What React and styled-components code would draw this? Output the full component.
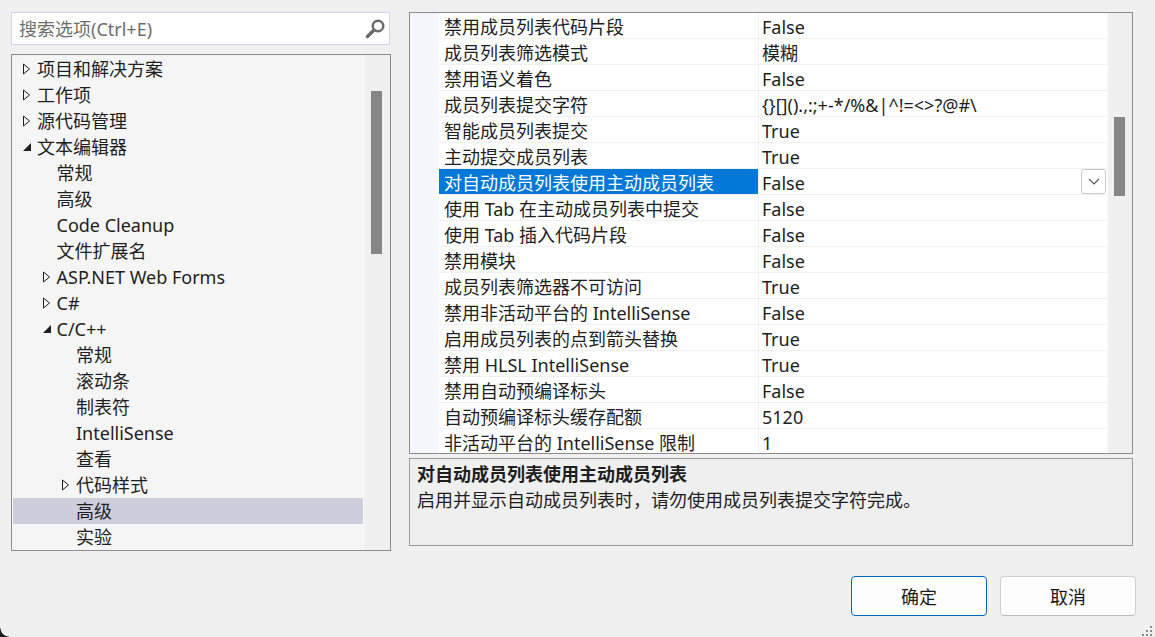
import styled, { createGlobalStyle } from "styled-components";

// ========== global ==========
const Global = createGlobalStyle`
  html, body {
    margin: 0;
    padding: 0;
    background: #f0f0f0;
  }
  body {
    font-family: "Noto Sans", "Noto Sans CJK SC", sans-serif;
    font-size: 18px;
    color: #1e1e1e;
  }
  * { box-sizing: border-box; }
`;

// ========== data ==========
const treeItems = [
  { label: "项目和解决方案", level: 0, arrow: "closed" },
  { label: "工作项", level: 0, arrow: "closed" },
  { label: "源代码管理", level: 0, arrow: "closed" },
  { label: "文本编辑器", level: 0, arrow: "open" },
  { label: "常规", level: 1 },
  { label: "高级", level: 1 },
  { label: "Code Cleanup", level: 1 },
  { label: "文件扩展名", level: 1 },
  { label: "ASP.NET Web Forms", level: 1, arrow: "closed" },
  { label: "C#", level: 1, arrow: "closed" },
  { label: "C/C++", level: 1, arrow: "open" },
  { label: "常规", level: 2 },
  { label: "滚动条", level: 2 },
  { label: "制表符", level: 2 },
  { label: "IntelliSense", level: 2 },
  { label: "查看", level: 2 },
  { label: "代码样式", level: 2, arrow: "closed" },
  { label: "高级", level: 2, selected: true },
  { label: "实验", level: 2 },
];

const props = [
  ["禁用成员列表代码片段", "False"],
  ["成员列表筛选模式", "模糊"],
  ["禁用语义着色", "False"],
  ["成员列表提交字符", "{}[]().,:;+-*/%&|^!=<>?@#\\"],
  ["智能成员列表提交", "True"],
  ["主动提交成员列表", "True"],
  ["对自动成员列表使用主动成员列表", "False", true],
  ["使用 Tab 在主动成员列表中提交", "False"],
  ["使用 Tab 插入代码片段", "False"],
  ["禁用模块", "False"],
  ["成员列表筛选器不可访问", "True"],
  ["禁用非活动平台的 IntelliSense", "False"],
  ["启用成员列表的点到箭头替换", "True"],
  ["禁用 HLSL IntelliSense", "True"],
  ["禁用自动预编译标头", "False"],
  ["自动预编译标头缓存配额", "5120"],
  ["非活动平台的 IntelliSense 限制", "1"],
];

// ========== layout ==========
const Window = styled.div`
  position: relative;
  width: 1155px;
  height: 637px;
  overflow: hidden;
  padding: 12px 22px 0 11px;
  display: flex;
  flex-direction: column;
`;

const Main = styled.div`
  display: grid;
  grid-template-columns: 380px 724px;
  column-gap: 18px;
  height: 534px;
`;

const LeftCol = styled.div`
  display: flex;
  flex-direction: column;
  gap: 9px;
`;

const RightCol = styled.div`
  display: flex;
  flex-direction: column;
  gap: 4px;
`;

// ========== search ==========
const Search = styled.div`
  height: 33px;
  width: 379px;
  border: 1px solid #cfd4e6;
  background: #fff;
  display: flex;
  align-items: center;
  padding: 0 3px 0 7px;
`;

const SearchText = styled.span`
  flex: 1;
  color: #6d6d6d;
  line-height: 31px;
  padding-top: 2px;
`;

const SearchIcon = styled.svg`
  width: 22px;
  height: 22px;
`;

// ========== tree ==========
const TreePanel = styled.div`
  flex: 1;
  border: 1px solid #8c8c8c;
  background: #f5f5f5;
  display: flex;
  overflow: hidden;
`;

const TreeList = styled.div`
  flex: 1;
  padding-top: 1px;
  overflow: hidden;
`;

const TreeRow = styled.div`
  height: 26px;
  line-height: 26px;
  display: flex;
  align-items: center;
  padding-left: ${(p) => 5 + p.$level * 19.5}px;
  margin-left: 1px;
  background: ${(p) => (p.$selected ? "#cccedb" : "transparent")};
  white-space: nowrap;
`;

const ArrowCell = styled.span`
  width: 19px;
  height: 26px;
  display: flex;
  align-items: center;
  padding-left: 4px;
`;

const Scrollbar = styled.div`
  width: ${(p) => p.$w}px;
  background: #f0f0f0;
  border-left: 1px solid #fafafa;
  padding-left: ${(p) => p.$pl}px;
  padding-top: ${(p) => p.$top}px;
`;

const Thumb = styled.div`
  width: 11px;
  height: ${(p) => p.$h}px;
  background: #868686;
`;

// ========== property grid ==========
const GridPanel = styled.div`
  height: 442px;
  border: 1px solid #8c8c8c;
  background: #fff;
  display: flex;
  overflow: hidden;
`;

const Margin = styled.div`
  width: 29px;
  background: #f4f7fc;
`;

const Rows = styled.div`
  width: 668px;
  overflow: hidden;
`;

const PropRow = styled.div`
  display: grid;
  grid-template-columns: 320px 1fr;
  height: 26px;
  border-bottom: 1px solid #f0f0f0;
`;

const NameCell = styled.div`
  padding: 2px 0 0 5px;
  line-height: 24px;
  overflow: hidden;
  white-space: nowrap;
  border-right: 1px solid #f0f0f0;
  background: ${(p) => (p.$selected ? "#0078d7" : "#fff")};
  color: ${(p) => (p.$selected ? "#fff" : "#1e1e1e")};
`;

const ValueCell = styled.div`
  padding-left: 3px;
  white-space: nowrap;
  display: flex;
  align-items: center;
  overflow: hidden;
`;

const ValueText = styled.span`
  flex: 1;
  line-height: 24px;
  padding-top: 2px;
`;

const DropButton = styled.div`
  width: 25px;
  height: 25px;
  margin-right: 1px;
  border: 1px solid #cacaca;
  border-radius: 3px;
  background: #fff;
  display: flex;
  align-items: center;
  justify-content: center;
`;

// ========== description ==========
const Desc = styled.div`
  height: 88px;
  border: 1px solid #9a9a9a;
  background: #efefef;
  padding: 2px 7px;
`;

const DescTitle = styled.div`
  font-weight: 700;
  line-height: 26px;
`;

const DescText = styled.div`
  line-height: 26px;
`;

// ========== footer ==========
const Footer = styled.div`
  display: flex;
  justify-content: flex-end;
  gap: 13px;
  margin-top: 30px;
  margin-right: -3px;
`;

const Button = styled.button`
  width: 136px;
  height: 40px;
  font: inherit;
  font-size: 18px;
  color: #1a1a1a;
  background: #fdfdfd;
  border: 1px solid ${(p) => (p.$primary ? "#0067c0" : "#d0d0d0")};
  border-bottom-color: ${(p) => (p.$primary ? "#0067c0" : "#bcbcbc")};
  border-radius: 4px;
  padding: 0;
`;

const Grip = styled.svg`
  position: absolute;
  right: 2px;
  bottom: 0;
`;

const Corner = styled.div`
  position: absolute;
  left: 0;
  bottom: 0;
  width: 9px;
  height: 9px;
  background: radial-gradient(circle at 100% 0, transparent 8px, #1b1b1b 9px);
`;

// ========== parts ==========
const Arrow = ({ kind }) => {
  if (kind === "closed") {
    return (
      <svg width="9" height="12" viewBox="0 0 9 12">
        <polygon points="1.5,1 7.5,6 1.5,11" fill="none" stroke="#1e1e1e" strokeWidth="1" />
      </svg>
    );
  }
  if (kind === "open") {
    return (
      <svg width="10" height="12" viewBox="0 0 10 12">
        <polygon points="9,2 9,10 1,10" fill="#1e1e1e" />
      </svg>
    );
  }
  return null;
};

const App = () => {
  return (
    <>
      <Global />
      <Window>
        <Main>
          <LeftCol>
            <Search>
              <SearchText>搜索选项(Ctrl+E)</SearchText>
              <SearchIcon viewBox="0 0 22 22">
                <circle cx="14" cy="8" r="5.3" fill="none" stroke="#6a6a6a" strokeWidth="2.4" />
                <line x1="10" y1="12" x2="3.5" y2="18.5" stroke="#6a6a6a" strokeWidth="3.4" strokeLinecap="round" />
              </SearchIcon>
            </Search>
            <TreePanel>
              <TreeList>
                {treeItems.map((it, i) => (
                  <TreeRow key={i} $level={it.level} $selected={it.selected}>
                    <ArrowCell>
                      <Arrow kind={it.arrow} />
                    </ArrowCell>
                    {it.label}
                  </TreeRow>
                ))}
              </TreeList>
              <Scrollbar $w={27} $pl={7} $top={36}>
                <Thumb $h={163} />
              </Scrollbar>
            </TreePanel>
          </LeftCol>

          <RightCol>
            <GridPanel>
              <Margin />
              <Rows>
                {props.map(([name, value, sel], i) => (
                  <PropRow key={i}>
                    <NameCell $selected={sel}>{name}</NameCell>
                    <ValueCell>
                      <ValueText>{value}</ValueText>
                      {sel && (
                        <DropButton>
                          <svg width="12" height="7" viewBox="0 0 12 7">
                            <polyline points="1,1 6,6 11,1" fill="none" stroke="#555" strokeWidth="1.1" />
                          </svg>
                        </DropButton>
                      )}
                    </ValueCell>
                  </PropRow>
                ))}
              </Rows>
              <Scrollbar $w={25} $pl={6} $top={104}>
                <Thumb $h={79} />
              </Scrollbar>
            </GridPanel>
            <Desc>
              <DescTitle>对自动成员列表使用主动成员列表</DescTitle>
              <DescText>启用并显示自动成员列表时，请勿使用成员列表提交字符完成。</DescText>
            </Desc>
          </RightCol>
        </Main>

        <Footer>
          <Button $primary>确定</Button>
          <Button>取消</Button>
        </Footer>

        <Grip width="14" height="14" viewBox="0 0 14 14">
          <g fill="#8a8a8a">
            <rect x="11" y="3" width="2" height="2" />
            <rect x="7" y="7" width="2" height="2" />
            <rect x="11" y="7" width="2" height="2" />
            <rect x="3" y="11" width="2" height="2" />
            <rect x="7" y="11" width="2" height="2" />
            <rect x="11" y="11" width="2" height="2" />
          </g>
        </Grip>
        <Corner />
      </Window>
    </>
  );
};

export default App;
